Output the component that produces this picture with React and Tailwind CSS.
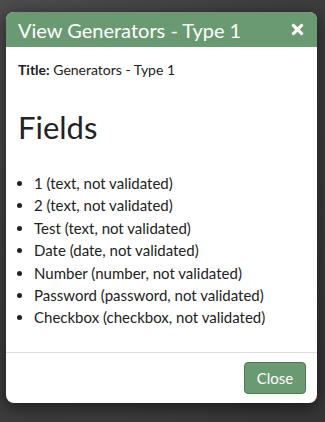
import { FaTimes } from "react-icons/fa";

const fields = [
  "1 (text, not validated)",
  "2 (text, not validated)",
  "Test (text, not validated)",
  "Date (date, not validated)",
  "Number (number, not validated)",
  "Password (password, not validated)",
  "Checkbox (checkbox, not validated)",
];

export default function App() {
  return (
    <div
      className="h-[422px] w-full bg-[radial-gradient(ellipse_at_top_left,#4d4d4d,#363636)] px-[6px] pt-3"
      style={{ fontFamily: '"Source Sans Pro", Lato, sans-serif' }}
    >
      {/* Modal */}
      <div className="w-[311px] overflow-hidden rounded-lg bg-white shadow-[0_4px_18px_rgba(0,0,0,0.6)]">
        <div className="flex h-[35px] items-center justify-between bg-[#6a9a72] pl-3 pr-[11px] text-white">
          <h4 className="text-[20px] leading-none">View Generators - Type 1</h4>
          <FaTimes className="h-[17px] w-[17px]" />
        </div>

        <div className="h-[305px] px-3 pt-[13px] text-[#222]">
          <p className="text-[14px] leading-5">
            <b>Title:</b> Generators - Type 1
          </p>
          <h1 className="mt-[27px] text-[31px] leading-[40px]">Fields</h1>
          <ul className="mt-[25px] list-disc pl-4 text-[15px] leading-[22.4px]">
            {fields.map((f) => (
              <li key={f}>{f}</li>
            ))}
          </ul>
        </div>

        <div className="flex justify-end border-t border-[#dcdcdc] px-[11px] pt-[9px] pb-[9px]">
          <button className="h-8 w-[62px] rounded-[4px] border border-[#4d7a55] bg-[#6a9a72] text-[15px] text-white">
            Close
          </button>
        </div>
      </div>
    </div>
  );
}
